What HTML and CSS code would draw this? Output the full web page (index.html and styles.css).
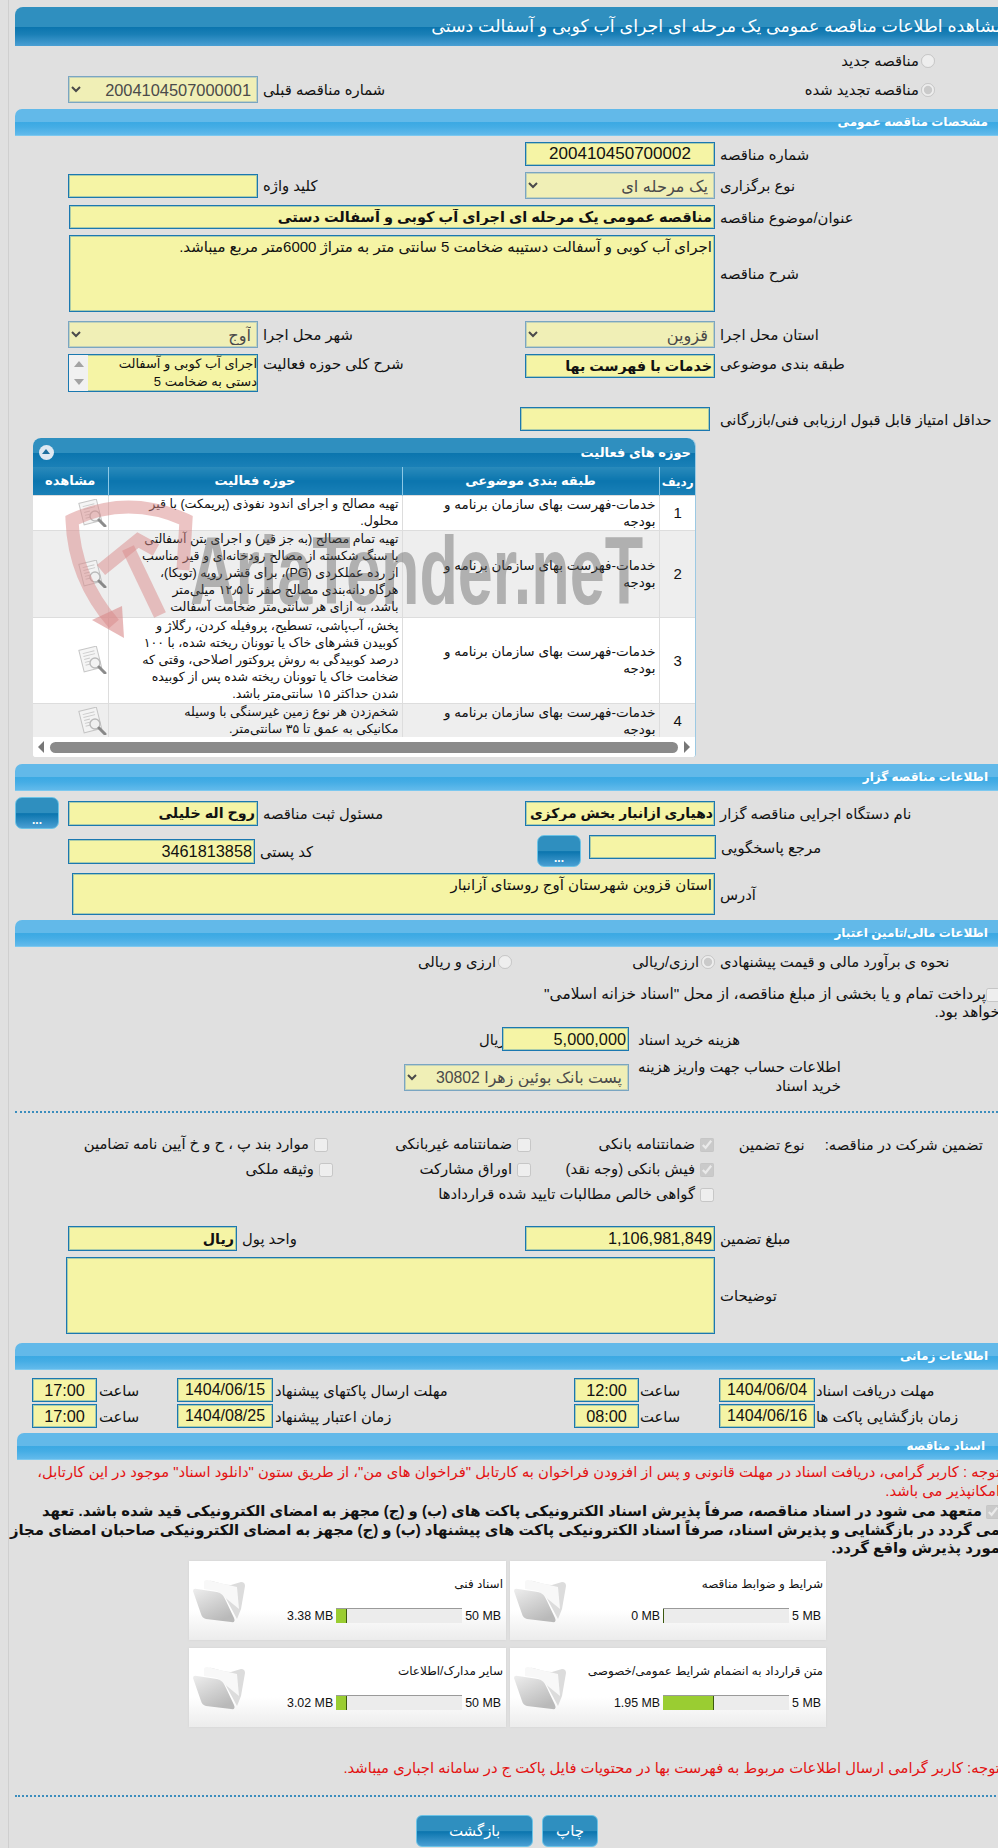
FILE: index.html
```html
<!DOCTYPE html>
<html lang="fa">
<head>
<meta charset="utf-8">
<title>مشاهده اطلاعات مناقصه</title>
<link rel="stylesheet" href="styles.css">
</head>
<body>
<svg class="defs" width="0" height="0" aria-hidden="true">
  <defs>
    <linearGradient id="fg" x1="0" y1="0" x2="0.6" y2="1"><stop offset="0" stop-color="#eeeeee"/><stop offset="1" stop-color="#b9b9b9"/></linearGradient>
    <symbol id="folder" viewBox="0 0 52 44">
      <path d="M14 6 Q14 1 19 2 L30 5 Q34 6 38 6 L48 3 Q52 3 52 7 L48 30 L44 40 L30 14 Z" fill="#dcdcdc"/>
      <path d="M11 3 Q11 1 14 1 L44 8 L46 30 L24 12 L11 10 Z" fill="#f8f8f8"/>
      <path d="M0 12 Q0 9 4 10 L24 13 Q30 14 33 22 L41 39 Q43 44 38 43 L13 40 Q9 39 8 35 Z" fill="url(#fg)"/>
    </symbol>
    <symbol id="doc" viewBox="0 0 30 28">
      <g transform="rotate(-14 12 12)">
        <rect x="3" y="2" width="18" height="22" fill="#f4f4f4" stroke="#bdbdbd"/>
        <path d="M6 6H18M6 9H18M6 12H12M6 15H11M6 18H11" stroke="#c4c4c4" fill="none"/>
      </g>
      <circle cx="17" cy="17" r="5" fill="#f0f0f0" fill-opacity=".7" stroke="#b0b0b0" stroke-width="1.4"/>
      <path d="M21 21L27 27" stroke="#777" stroke-width="3" stroke-linecap="round"/>
    </symbol>
  </defs>
</svg>
<div class="page">
  <h1 class="title" dir="rtl">مشاهده اطلاعات مناقصه عمومی یک مرحله ای اجرای آب کوبی و آسفالت دستی</h1>

  <div class="row h15 mt6">
    <div class="cell l"></div>
    <label class="radio-wrap" dir="rtl"><input type="radio" disabled>مناقصه جدید</label>
  </div>
  <div class="row h27 mt9">
    <div class="cell l">
      <select class="sel w190 big" dir="rtl" disabled><option>2004104507000001</option></select>
      <span class="lab">شماره مناقصه قبلی</span>
    </div>
    <label class="radio-wrap" dir="rtl"><input type="radio" checked disabled>مناقصه تجدید شده</label>
  </div>

  <h2 class="sec mt6" dir="rtl">مشخصات مناقصه عمومی</h2>

  <div class="row h24 mt6">
    <div class="cell l"></div>
    <div class="cell"><input class="fld w190 num long center" value="200410450700002" readonly><span class="lab">شماره مناقصه</span></div>
  </div>
  <div class="row h27 mt6">
    <div class="cell l"><input class="fld w190" readonly><span class="lab">کلید واژه</span></div>
    <div class="cell"><select class="sel w190" dir="rtl" disabled><option>یک مرحله ای</option></select><span class="lab">نوع برگزاری</span></div>
  </div>
  <div class="row h24 mt6">
    <div class="cell l wide"><input class="fld w646 strong subject" dir="rtl" value="مناقصه عمومی یک مرحله ای اجرای آب کوبی و آسفالت دستی" readonly><span class="lab">عنوان/موضوع مناقصه</span></div>
  </div>
  <div class="row h77 mt6">
    <div class="cell l wide"><textarea class="fld w646 area" dir="rtl" readonly>اجرای آب کوبی و آسفالت دستیبه ضخامت 5 سانتی متر به متراژ 6000متر مربع میباشد.</textarea><span class="lab">شرح مناقصه</span></div>
  </div>
  <div class="row h27 mt9">
    <div class="cell l"><select class="sel w190" dir="rtl" disabled><option>آوج</option></select><span class="lab">شهر محل اجرا</span></div>
    <div class="cell"><select class="sel w190" dir="rtl" disabled><option>قزوین</option></select><span class="lab">استان محل اجرا</span></div>
  </div>
  <div class="row h38 mt6">
    <div class="cell l top">
      <div class="listbox">
        <div class="sb"><i class="up"></i><i class="down"></i></div>
        <div class="lb-text" dir="rtl">اجرای آب کوبی و آسفالت<br>دستی به ضخامت 5</div>
      </div>
      <span class="lab lab-top">شرح کلی حوزه فعالیت</span>
    </div>
    <div class="cell top"><input class="fld w190 h24f strong" dir="rtl" value="خدمات با فهرست بها" readonly><span class="lab lab-top">طبقه بندی موضوعی</span></div>
  </div>
  <div class="row h24 mt15">
    <div class="cell l"></div>
    <div class="cell shift"><input class="fld w190" readonly><span class="lab lab-far">حداقل امتیاز قابل قبول ارزیابی فنی/بازرگانی</span></div>
  </div>

  <section class="panel">
    <header class="panel-head" dir="rtl"><span>حوزه های فعالیت</span><i class="collapse"></i></header>
    <div class="table-clip">
      <table class="grid" dir="rtl">
        <colgroup><col class="c1"><col class="c2"><col class="c3"><col class="c4"></colgroup>
        <thead><tr><th>ردیف</th><th>طبقه بندی موضوعی</th><th>حوزه فعالیت</th><th>مشاهده</th></tr></thead>
        <tbody>
          <tr class="r35"><td class="idx">1</td><td class="tc">خدمات-فهرست بهای سازمان برنامه و<br>بودجه</td><td>تهیه مصالح و اجرای اندود نفوذی (پریمکت) با قیر<br>محلول.</td><td class="ic"><svg class="doc"><use href="#doc"/></svg></td></tr>
          <tr class="r87 alt"><td class="idx">2</td><td class="tc">خدمات-فهرست بهای سازمان برنامه و<br>بودجه</td><td>تهیه تمام مصالح (به جز قیر) و اجرای بتن آسفالتی<br>با سنگ شکسته از مصالح رودخانه‌ای و قیر مناسب<br>از رده عملکردی (PG)، برای قشر رویه (توپکا)،<br>هرگاه دانه‌بندی مصالح صفر تا ۱۲٫۵ میلی‌متر<br>باشد، به ازای هر سانتی‌متر ضخامت آسفالت</td><td class="ic"><svg class="doc"><use href="#doc"/></svg></td></tr>
          <tr class="r85"><td class="idx">3</td><td class="tc">خدمات-فهرست بهای سازمان برنامه و<br>بودجه</td><td>پخش، آب‌پاشی، تسطیح، پروفیله کردن، رگلاژ و<br>کوبیدن قشرهای خاک یا توونان ریخته شده، با ۱۰۰<br>درصد کوبیدگی به روش پروکتور اصلاحی، وقتی که<br>ضخامت خاک یا توونان ریخته شده پس از کوبیده<br>شدن حداکثر ۱۵ سانتی‌متر باشد.</td><td class="ic"><svg class="doc"><use href="#doc"/></svg></td></tr>
          <tr class="r35 alt"><td class="idx">4</td><td class="tc">خدمات-فهرست بهای سازمان برنامه و<br>بودجه</td><td>شخم‌زدن هر نوع زمین غیرسنگی با وسیله<br>مکانیکی به عمق تا ۳۵ سانتی‌متر.</td><td class="ic"><svg class="doc"><use href="#doc"/></svg></td></tr>
        </tbody>
      </table>
    </div>
    <div class="hscroll"><i class="left"></i><div class="thumb"></div><i class="right"></i></div>
    <svg class="watermark" viewBox="0 0 620 150" width="620" height="150" aria-hidden="true">
      <g fill="none" stroke="#d98a8a" stroke-opacity=".5" stroke-width="13">
        <path d="M133 70 L136 20 Q78 -6 22 20 Q24 78 64 124"/>
        <path d="M51 70 L88 40 L106 50"/>
        <path d="M78 48 L110 115"/>
      </g>
      <path d="M42 120 L74 138 L72 106 Z" fill="#d98a8a" fill-opacity=".6"/>
    </svg>
    <div class="wm-word" aria-hidden="true">AriaTender.neT</div>
  </section>

  <h2 class="sec mt7" dir="rtl">اطلاعات مناقصه گزار</h2>

  <div class="row h32 mt6">
    <div class="cell gap9"><button class="dots" type="button">...</button><input class="fld w190 h25f strong" dir="rtl" value="روح اله خلیلی" readonly><span class="lab">مسئول ثبت مناقصه</span></div>
    <div class="cell"><input class="fld w190 h25f strong tight" dir="rtl" value="دهیاری ازانبار بخش مرکزی" readonly><span class="lab">نام دستگاه اجرایی مناقصه گزار</span></div>
  </div>
  <div class="row h32 mt6">
    <div class="cell l"><input class="fld w187 h25f num" dir="rtl" value="3461813858" readonly><span class="lab">کد پستی</span></div>
    <div class="cell top ref"><button class="dots" type="button">...</button><input class="fld w127 h24f" readonly><span class="lab lab-ref">مرجع پاسخگویی</span></div>
  </div>
  <div class="row h38 mt6">
    <div class="cell pad57 wide"><textarea class="fld w643 area" dir="rtl" readonly>استان قزوین شهرستان آوج روستای آزانبار</textarea><span class="lab">آدرس</span></div>
  </div>

  <h2 class="sec mt9" dir="rtl">اطلاعات مالی/تامین اعتبار</h2>

  <div class="row h15 mt6">
    <div class="cell endline">
      <label class="inline-opt" dir="rtl"><input type="radio" disabled>ارزی و ریالی</label>
    </div>
    <div class="cell">
      <label class="inline-opt opt-fixed" dir="rtl"><input type="radio" checked disabled>ارزی/ریالی</label>
      <span class="lab">نحوه ی برآورد مالی و قیمت پیشنهادی</span>
    </div>
  </div>
  <div class="para mt17" dir="rtl"><input type="checkbox" disabled>پرداخت تمام و یا بخشی از مبلغ مناقصه، از محل "اسناد خزانه اسلامی"<br>خواهد بود.</div>
  <div class="row h24 mt6">
    <div class="cell cost"><span class="lab-rial">ریال</span><input class="fld w127 num" dir="rtl" value="5,000,000" readonly><span class="lab lab-9">هزینه خرید اسناد</span></div>
  </div>
  <div class="row h27 mt7">
    <div class="cell bank"><select class="sel w225 bank-sel" dir="rtl" disabled><option>پست بانک بوئین زهرا 30802</option></select><span class="lab lab-9 two">اطلاعات حساب جهت واریز هزینه<br>خرید اسناد</span></div>
  </div>
  <hr class="dot mt26">

  <div class="guar mt23">
    <div class="guar-head" dir="rtl"><span class="g1">تضمین شرکت در مناقصه:</span><span class="g2">نوع تضمین</span></div>
    <div class="g-grid" dir="rtl">
      <label class="g-a"><input type="checkbox" checked disabled>ضمانتنامه بانکی</label>
      <label class="g-b"><input type="checkbox" disabled>ضمانتنامه غیربانکی</label>
      <label class="g-c"><input type="checkbox" disabled>موارد بند پ ، ح و خ آیین نامه تضامین</label>
      <label class="g-a"><input type="checkbox" checked disabled>فیش بانکی (وجه نقد)</label>
      <label class="g-b"><input type="checkbox" disabled>اوراق مشارکت</label>
      <label class="g-c2"><input type="checkbox" disabled>وثیقه ملکی</label>
      <label class="g-a g-long"><input type="checkbox" disabled>گواهی خالص مطالبات تایید شده قراردادها</label>
    </div>
  </div>

  <div class="row h25 mt30">
    <div class="cell l"><input class="fld w169 h25f strong" dir="rtl" value="ریال" readonly><span class="lab">واحد پول</span></div>
    <div class="cell"><input class="fld w190 h25f num" dir="rtl" value="1,106,981,849" readonly><span class="lab">مبلغ تضمین</span></div>
  </div>
  <div class="row h77 mt6">
    <div class="cell pad51 wide"><textarea class="fld w649 area" dir="rtl" readonly></textarea><span class="lab">توضیحات</span></div>
  </div>

  <h2 class="sec mt9" dir="rtl">اطلاعات زمانی</h2>

  <div class="times mt8">
    <div class="t-row">
      <input class="fld time num center" value="17:00" readonly><span class="t-lab">ساعت</span>
      <input class="fld date num center" value="1404/06/15" readonly><span class="t-lab wide-a">مهلت ارسال پاکتهای پیشنهاد</span>
      <input class="fld time num center" value="12:00" readonly><span class="t-lab">ساعت</span>
      <input class="fld date num center" value="1404/06/04" readonly><span class="t-lab">مهلت دریافت اسناد</span>
    </div>
    <div class="t-row second">
      <input class="fld time num center" value="17:00" readonly><span class="t-lab">ساعت</span>
      <input class="fld date num center" value="1404/08/25" readonly><span class="t-lab wide-a">زمان اعتبار پیشنهاد</span>
      <input class="fld time num center" value="08:00" readonly><span class="t-lab">ساعت</span>
      <input class="fld date num center" value="1404/06/16" readonly><span class="t-lab">زمان بازگشایی پاکت ها</span>
    </div>
  </div>

  <h2 class="sec docs mt5" dir="rtl">اسناد مناقصه</h2>

  <p class="note red" dir="rtl">توجه : کاربر گرامی، دریافت اسناد در مهلت قانونی و پس از افزودن فراخوان به کارتابل "فراخوان های من"، از طریق ستون "دانلود اسناد" موجود در این کارتابل،<br>امکانپذیر می باشد.</p>
  <p class="note commit" dir="rtl"><input type="checkbox" checked disabled>متعهد می شود در اسناد مناقصه، صرفاً پذیرش اسناد الکترونیکی پاکت های (ب) و (ج) مجهز به امضای الکترونیکی قید شده باشد. تعهد<br>می گردد در بازگشایی و پذیرش اسناد، صرفاً اسناد الکترونیکی پاکت های پیشنهاد (ب) و (ج) مجهز به امضای الکترونیکی صاحبان امضای مجاز<br>مورد پذیرش واقع گردد.</p>

  <div class="cards">
    <article class="card"><svg class="folder"><use href="#folder"/></svg><div class="card-body"><div class="card-title" dir="rtl">اسناد فنی</div><div class="meter"><span>3.38 MB</span><div class="bar"><div class="fill fill-a"></div></div><span>50 MB</span></div></div></article>
    <article class="card"><svg class="folder"><use href="#folder"/></svg><div class="card-body"><div class="card-title" dir="rtl">شرایط و ضوابط مناقصه</div><div class="meter"><span>0 MB</span><div class="bar"><div class="fill fill-z"></div></div><span>5 MB</span></div></div></article>
    <article class="card"><svg class="folder"><use href="#folder"/></svg><div class="card-body"><div class="card-title" dir="rtl">سایر مدارک/اطلاعات</div><div class="meter"><span>3.02 MB</span><div class="bar"><div class="fill fill-a"></div></div><span>50 MB</span></div></div></article>
    <article class="card"><svg class="folder"><use href="#folder"/></svg><div class="card-body"><div class="card-title" dir="rtl">متن قرارداد به انضمام شرایط عمومی/خصوصی</div><div class="meter"><span>1.95 MB</span><div class="bar"><div class="fill fill-b"></div></div><span>5 MB</span></div></div></article>
  </div>

  <p class="note red last" dir="rtl">توجه: کاربر گرامی ارسال اطلاعات مربوط به فهرست بها در محتویات فایل پاکت ج در سامانه اجباری میباشد.</p>
  <hr class="dot end">
  <div class="actions">
    <button class="act back" type="button">بازگشت</button>
    <button class="act print" type="button">چاپ</button>
  </div>
</div>
</body>
</html>
```

FILE: styles.css
```css
*{box-sizing:border-box}
html,body{margin:0;padding:0;background:#e0e0e0;overflow:hidden}
body{width:998px;height:1848px;font-family:"Liberation Sans","DejaVu Sans",sans-serif;font-size:14.8px;color:#111}
.defs{position:absolute}
.page{width:990px;height:1848px;margin-left:8px;padding:7px 0 0 6px;border-left:1px solid #cfcfcf;overflow:hidden}
.title{margin:0;height:39px;width:990px;border-radius:8px 0 0 0;color:#fff;font-size:17.4px;font-weight:normal;line-height:39px;white-space:nowrap;text-align:right;direction:rtl;
 background:linear-gradient(#2f8fbf 0,#2f8fbf 50%,#0b75ae 52%,#1a7fb6 70%,#4a9fd3 100%)}
.sec{margin-bottom:0;margin-left:0;margin-right:0;height:27px;width:983px;padding:0 10px;border-radius:7px 0 0 0;color:#fff;font-size:12px;font-weight:bold;line-height:26px;text-align:right;
 background:linear-gradient(#62b9e9 0,#62b9e9 50%,#3ba9e3 52%,#45ade5 70%,#62baeb 100%);border-bottom:1px solid #7cc8ef}
.mt5{margin-top:5px}.mt6{margin-top:6px}.mt7{margin-top:7px}.mt8{margin-top:8px}.mt9{margin-top:9px}.mt15{margin-top:15px}.mt17{margin-top:17px}.mt23{margin-top:23px}.mt26{margin-top:26px}.mt30{margin-top:30px}
.row{display:grid;grid-template-columns:510px 1fr;width:983px}
.h15{height:15px}.h24{height:24px}.h25{height:25px}.h27{height:27px}.h32{height:32px}.h38{height:38px}.h77{height:77px}
.cell{display:flex;align-items:center;gap:5px;min-width:0}
.cell.l{padding-left:53px}
.cell.wide{grid-column:1 / -1}
.cell.l.wide{padding-left:54px}
.cell.top{align-items:flex-start}
.cell.gap9{gap:5px}
.lab{white-space:nowrap;text-align:left;direction:rtl}
.lab-top{margin-top:1px}
.lab-far{margin-left:5px}
.radio-wrap{display:flex;align-items:center;justify-content:flex-start;padding-right:63px;white-space:nowrap}
.radio-wrap input,.inline-opt input{margin:0 0 0 2px;width:14px;height:14px;flex:none}
.fld{height:24px;border:1px solid #1a78b0;box-shadow:inset 0 0 0 1px rgba(31,125,181,.35);background:#f5f4a5;padding:0 2px;font-family:inherit;font-size:14.8px;color:#111;outline:none;flex:none;border-radius:0;resize:none;display:block}
.sel{height:27px;border:1px solid #7aa6c2;box-shadow:inset 0 0 0 1px rgba(122,166,194,.4);background:#f0efb6;font-family:inherit;font-size:16.2px;color:#4a4a4a;flex:none;border-radius:0;padding:0 2px;opacity:1}
.big{font-size:16.4px}
.bank-sel{font-size:15.8px}
.w190{width:190px}.w187{width:187px}.w169{width:169px}.w127{width:127px}.w225{width:225px}.w646{width:646px}.w643{width:643px}.w649{width:649px}
.h24f{height:24px}.h25f{height:25px}
.num{font-size:16.3px;letter-spacing:0}
.long{font-size:17px}
.center{text-align:center}
.strong{font-weight:bold;font-size:14.3px}
.subject{font-size:14.5px}
.tight{font-size:13.9px;padding:0 1px}
.area{height:100%;font-size:15px;line-height:19px;padding:1px 2px;overflow:hidden}
.shift{margin-left:-5px}
.listbox{width:190px;height:38px;border:1px solid #1a78b0;box-shadow:inset 0 0 0 1px rgba(31,125,181,.35);background:#f5f4a5;display:flex;flex:none;overflow:hidden}
.sb{width:19px;background:#f1f1f1;display:flex;flex-direction:column;justify-content:space-around;align-items:center;flex:none}
.sb i{display:block;width:0;height:0;border-left:5px solid transparent;border-right:5px solid transparent}
.sb .up{border-bottom:6px solid #a3a3a3}
.sb .down{border-top:6px solid #a3a3a3}
.lb-text{flex:1;line-height:18px;white-space:nowrap;font-size:13px;text-align:right}
.panel{position:relative;width:663px;height:319px;margin:7px 0 0 18px;background:#fff;border-radius:8px 8px 3px 3px;border-right:1px solid #9cc9e3;overflow:visible}
.panel-head{height:29px;border-radius:8px 8px 0 0;color:#fff;font-size:13px;font-weight:bold;display:flex;align-items:center;justify-content:space-between;padding:0 4px 0 6px;
 background:linear-gradient(#2f8fbf 0,#2f8fbf 50%,#0b75ae 52%,#1a80b7 100%)}
.collapse{display:block;width:15px;height:15px;border-radius:50%;background:#dde8f2;position:relative}
.collapse::after{content:"";position:absolute;left:3px;top:4px;border-left:4px solid transparent;border-right:4px solid transparent;border-bottom:5px solid #1d6f9f}
.table-clip{height:270px;overflow:hidden}
.grid{width:663px;table-layout:fixed;border-collapse:collapse;line-height:17px}
.c1{width:37px}.c2{width:257px}.c3{width:294px}.c4{width:75px}
.grid th{height:28px;color:#fff;font-size:13px;font-weight:bold;border-left:1px solid #8cc8e6;padding:0;
 background:linear-gradient(#2a8abb 0,#0b75ae 50%,#1a80b7 100%)}
.grid th:first-child{font-size:12px;padding-top:4px}
.grid th:last-child{border-left:0}
.grid td{padding:0 3px;vertical-align:middle;border-left:1px solid #ddd;border-top:1px solid #ddd;text-align:right;white-space:nowrap;overflow:visible;font-size:12.6px}
.grid td.tc{font-size:13.5px}
.grid td:last-child{border-left:0}
.grid td.idx{text-align:center;font-size:15px}
.grid td.ic{padding:0;text-align:left}
.r35{height:35px}.r87{height:87px}.r85{height:85px}
.alt td{background:#eeeeee}
.doc{width:30px;height:28px;display:block;margin:0 0 0 44px;opacity:.85}
.hscroll{height:20px;background:#fff;display:flex;align-items:center;gap:6px;padding:0 5px;border-radius:0 0 3px 3px}
.hscroll .thumb{flex:1;height:11px;background:#8a8a8a;border-radius:6px}
.hscroll i{display:block;width:0;height:0;border-top:6px solid transparent;border-bottom:6px solid transparent}
.hscroll .left{border-right:6px solid #777}
.hscroll .right{border-left:6px solid #777}
.watermark{position:absolute;left:17px;top:62px;pointer-events:none}
.wm-word{position:absolute;left:157px;top:78px;width:700px;font-family:"Liberation Sans",sans-serif;font-weight:bold;font-size:96px;line-height:110px;color:rgba(90,90,90,.42);white-space:nowrap;transform-origin:0 0;transform:scaleX(.655);pointer-events:none}
.dots{height:32px;width:44px;flex:none;padding:0;border:1px solid #6cc3e6;border-radius:7px;color:#fff;font-size:12px;font-weight:bold;line-height:44px;
 background:linear-gradient(#2f8fbf 0,#2f8fbf 50%,#0b75ae 52%,#4a9fd3 100%)}
.gap9 .dots+input{margin-left:4px}
.ref{padding-left:12px;gap:8px}
.lab-ref{margin:4px 0 0 -3px}
.pad57{padding-left:57px}
.pad51{padding-left:51px}
.endline{padding-left:300px;justify-content:flex-start}
.inline-opt{display:flex;align-items:center;white-space:nowrap}
.endline .inline-opt{width:197px;justify-content:flex-start}
.opt-fixed{width:190px;justify-content:flex-start}
.para{width:983px;line-height:18px;text-align:right;white-space:nowrap;position:relative;left:2px;font-size:15.4px}
.para input{margin:0;width:14px;height:14px;vertical-align:middle}
.cost{grid-column:1 / -1;padding-left:464px;gap:0}
.lab-rial{width:23px;flex:none}
.lab-9{margin-left:9px}
.bank{grid-column:1 / -1;padding-left:389px;gap:0}
.two{line-height:19px;text-align:right}
.dot{border:0;border-top:2px dotted #3b8dbd;height:0;margin-bottom:0;margin-left:0;margin-right:0;width:983px}
.guar{position:relative;height:60px;width:983px}
.guar-head{position:absolute;top:0;right:15px;display:flex;gap:20px;white-space:nowrap}
.g-grid{position:absolute;right:284px;top:-1px;width:700px;display:grid;grid-template-columns:183px 203px 300px;grid-auto-rows:25px;white-space:nowrap}
.g-grid input{width:14px;height:14px;margin:0 0 0 5px;vertical-align:middle}
.g-c2{margin-right:-5px}
.g-long{grid-column:1 / span 2}
.times{width:983px}
.t-row{position:relative;display:grid;grid-template-columns:65px 80px 96px 301px 64px 81px 95px 1fr;align-items:center;height:24px;padding-left:17px;gap:0}
.t-row.second{margin-top:2px;height:24px}
.t-lab{white-space:nowrap;direction:rtl;text-align:left;padding-left:2px}
.time{width:65px}.date{width:96px;font-size:16px;padding:0}
.docs{width:981px;margin-left:2px;padding-right:13px}
.note{margin:0;width:985px;white-space:nowrap;text-align:right;overflow:visible}
.red{color:#e31212;line-height:19px;margin-top:3px}
.commit{font-weight:bold;font-size:14.9px;line-height:18.7px;margin-top:1px}
.commit input{margin:0 0 0 4px;width:14px;height:14px;vertical-align:middle}
.cards{display:grid;grid-template-columns:317px 316px;column-gap:4px;row-gap:8px;margin:3px 0 0 174px;width:640px}
.card{display:flex;height:79px;background:linear-gradient(#fff 0,#fff 62%,#ececec 100%);box-shadow:0 0 2px #cfcfcf}
.folder{width:52px;height:44px;margin:18px 0 0 4px;flex:none}
.card-body{flex:1;display:flex;flex-direction:column;min-width:0}
.card-title{font-size:12px;margin:15px 3px 0 0;height:16px;line-height:16px;white-space:nowrap;text-align:right}
.meter{display:flex;justify-content:flex-end;align-items:center;gap:3px;margin-top:16px;padding-right:5px;font-size:12.4px;white-space:nowrap}
.bar{width:126px;height:15px;background:#ececec;border-top:1px solid #9a9a9a;direction:ltr;flex:none}
.fill{height:100%;background:#9acd32;border-right:1px solid #3d5a10}
.fill-z{width:1px}.fill-a{width:11px}.fill-b{width:51px}
.last{margin-top:32px}
.end{margin-top:17px;width:981px}
.actions{display:flex;gap:9px;margin:18px 0 0 401px}
.act{height:32px;border:1px solid #6cc3e6;border-radius:6px;color:#fff;font-family:inherit;font-size:15px;padding:0;
 background:linear-gradient(#2f8fbf 0,#2f8fbf 50%,#0b75ae 52%,#4a9fd3 100%)}
.back{width:117px}.print{width:56px}
```
